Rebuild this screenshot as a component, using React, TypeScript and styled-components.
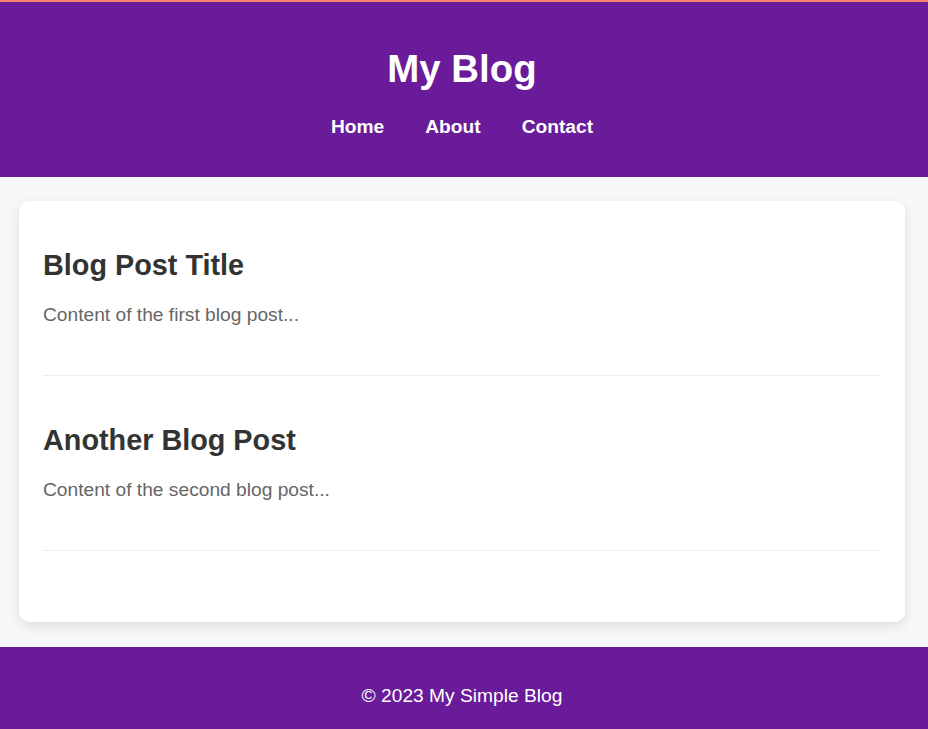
import React from "react";
import styled, { createGlobalStyle } from "styled-components";

const GlobalStyle = createGlobalStyle`
  html, body {
    margin: 0;
    padding: 0;
    overflow: hidden;
    background: #f7f7f7;
  }
  body {
    font-family: "Liberation Sans", Arial, sans-serif;
    font-size: 19.2px;
    line-height: normal;
    color: #333;
  }
`;

const Header = styled.header`
  background: #6a1b9a;
  border-top: 2px solid #ff7f6e;
  padding: 45px 4px 39px 0;
  display: flex;
  flex-direction: column;
  align-items: center;
  color: #fff;
`;

const SiteTitle = styled.h1`
  margin: 0;
  font-size: 38.4px;
  font-weight: 700;
  line-height: 44px;
`;

const Nav = styled.nav`
  margin-top: 25px;
  display: flex;
  gap: 41px;
`;

const NavLink = styled.a`
  color: #fff;
  text-decoration: none;
  font-weight: 700;
  font-size: 19.2px;
  line-height: 22px;
`;

const Main = styled.main`
  padding: 24px 23px 25px 19px;
`;

const Card = styled.div`
  background: #fff;
  border-radius: 10px;
  box-shadow: 0 4px 12px rgba(0, 0, 0, 0.1);
  padding: 24px 25px 47px 24px;
`;

const Article = styled.article`
  padding: 24px 0 49px;
  margin-bottom: 24px;
  border-bottom: 1px solid #eeeeee;
`;

const PostTitle = styled.h2`
  margin: 0;
  font-size: 28.8px;
  font-weight: 700;
  line-height: 33px;
  color: #333;
`;

const PostBody = styled.p`
  margin: 22px 0 0;
  font-size: 19.2px;
  line-height: 22px;
  color: #666;
`;

const Footer = styled.footer`
  background: #6a1b9a;
  color: #fff;
  text-align: center;
  padding: 38px 4px 38px 0;
  font-size: 19.2px;
  line-height: 22px;
`;

const posts = [
  { title: "Blog Post Title", body: "Content of the first blog post..." },
  { title: "Another Blog Post", body: "Content of the second blog post..." },
];

export default function App() {
  return (
    <>
      <GlobalStyle />
      <Header>
        <SiteTitle>My Blog</SiteTitle>
        <Nav>
          <NavLink href="#">Home</NavLink>
          <NavLink href="#">About</NavLink>
          <NavLink href="#">Contact</NavLink>
        </Nav>
      </Header>
      <Main>
        <Card>
          {posts.map((p) => (
            <Article key={p.title}>
              <PostTitle>{p.title}</PostTitle>
              <PostBody>{p.body}</PostBody>
            </Article>
          ))}
        </Card>
      </Main>
      <Footer>© 2023 My Simple Blog</Footer>
    </>
  );
}
